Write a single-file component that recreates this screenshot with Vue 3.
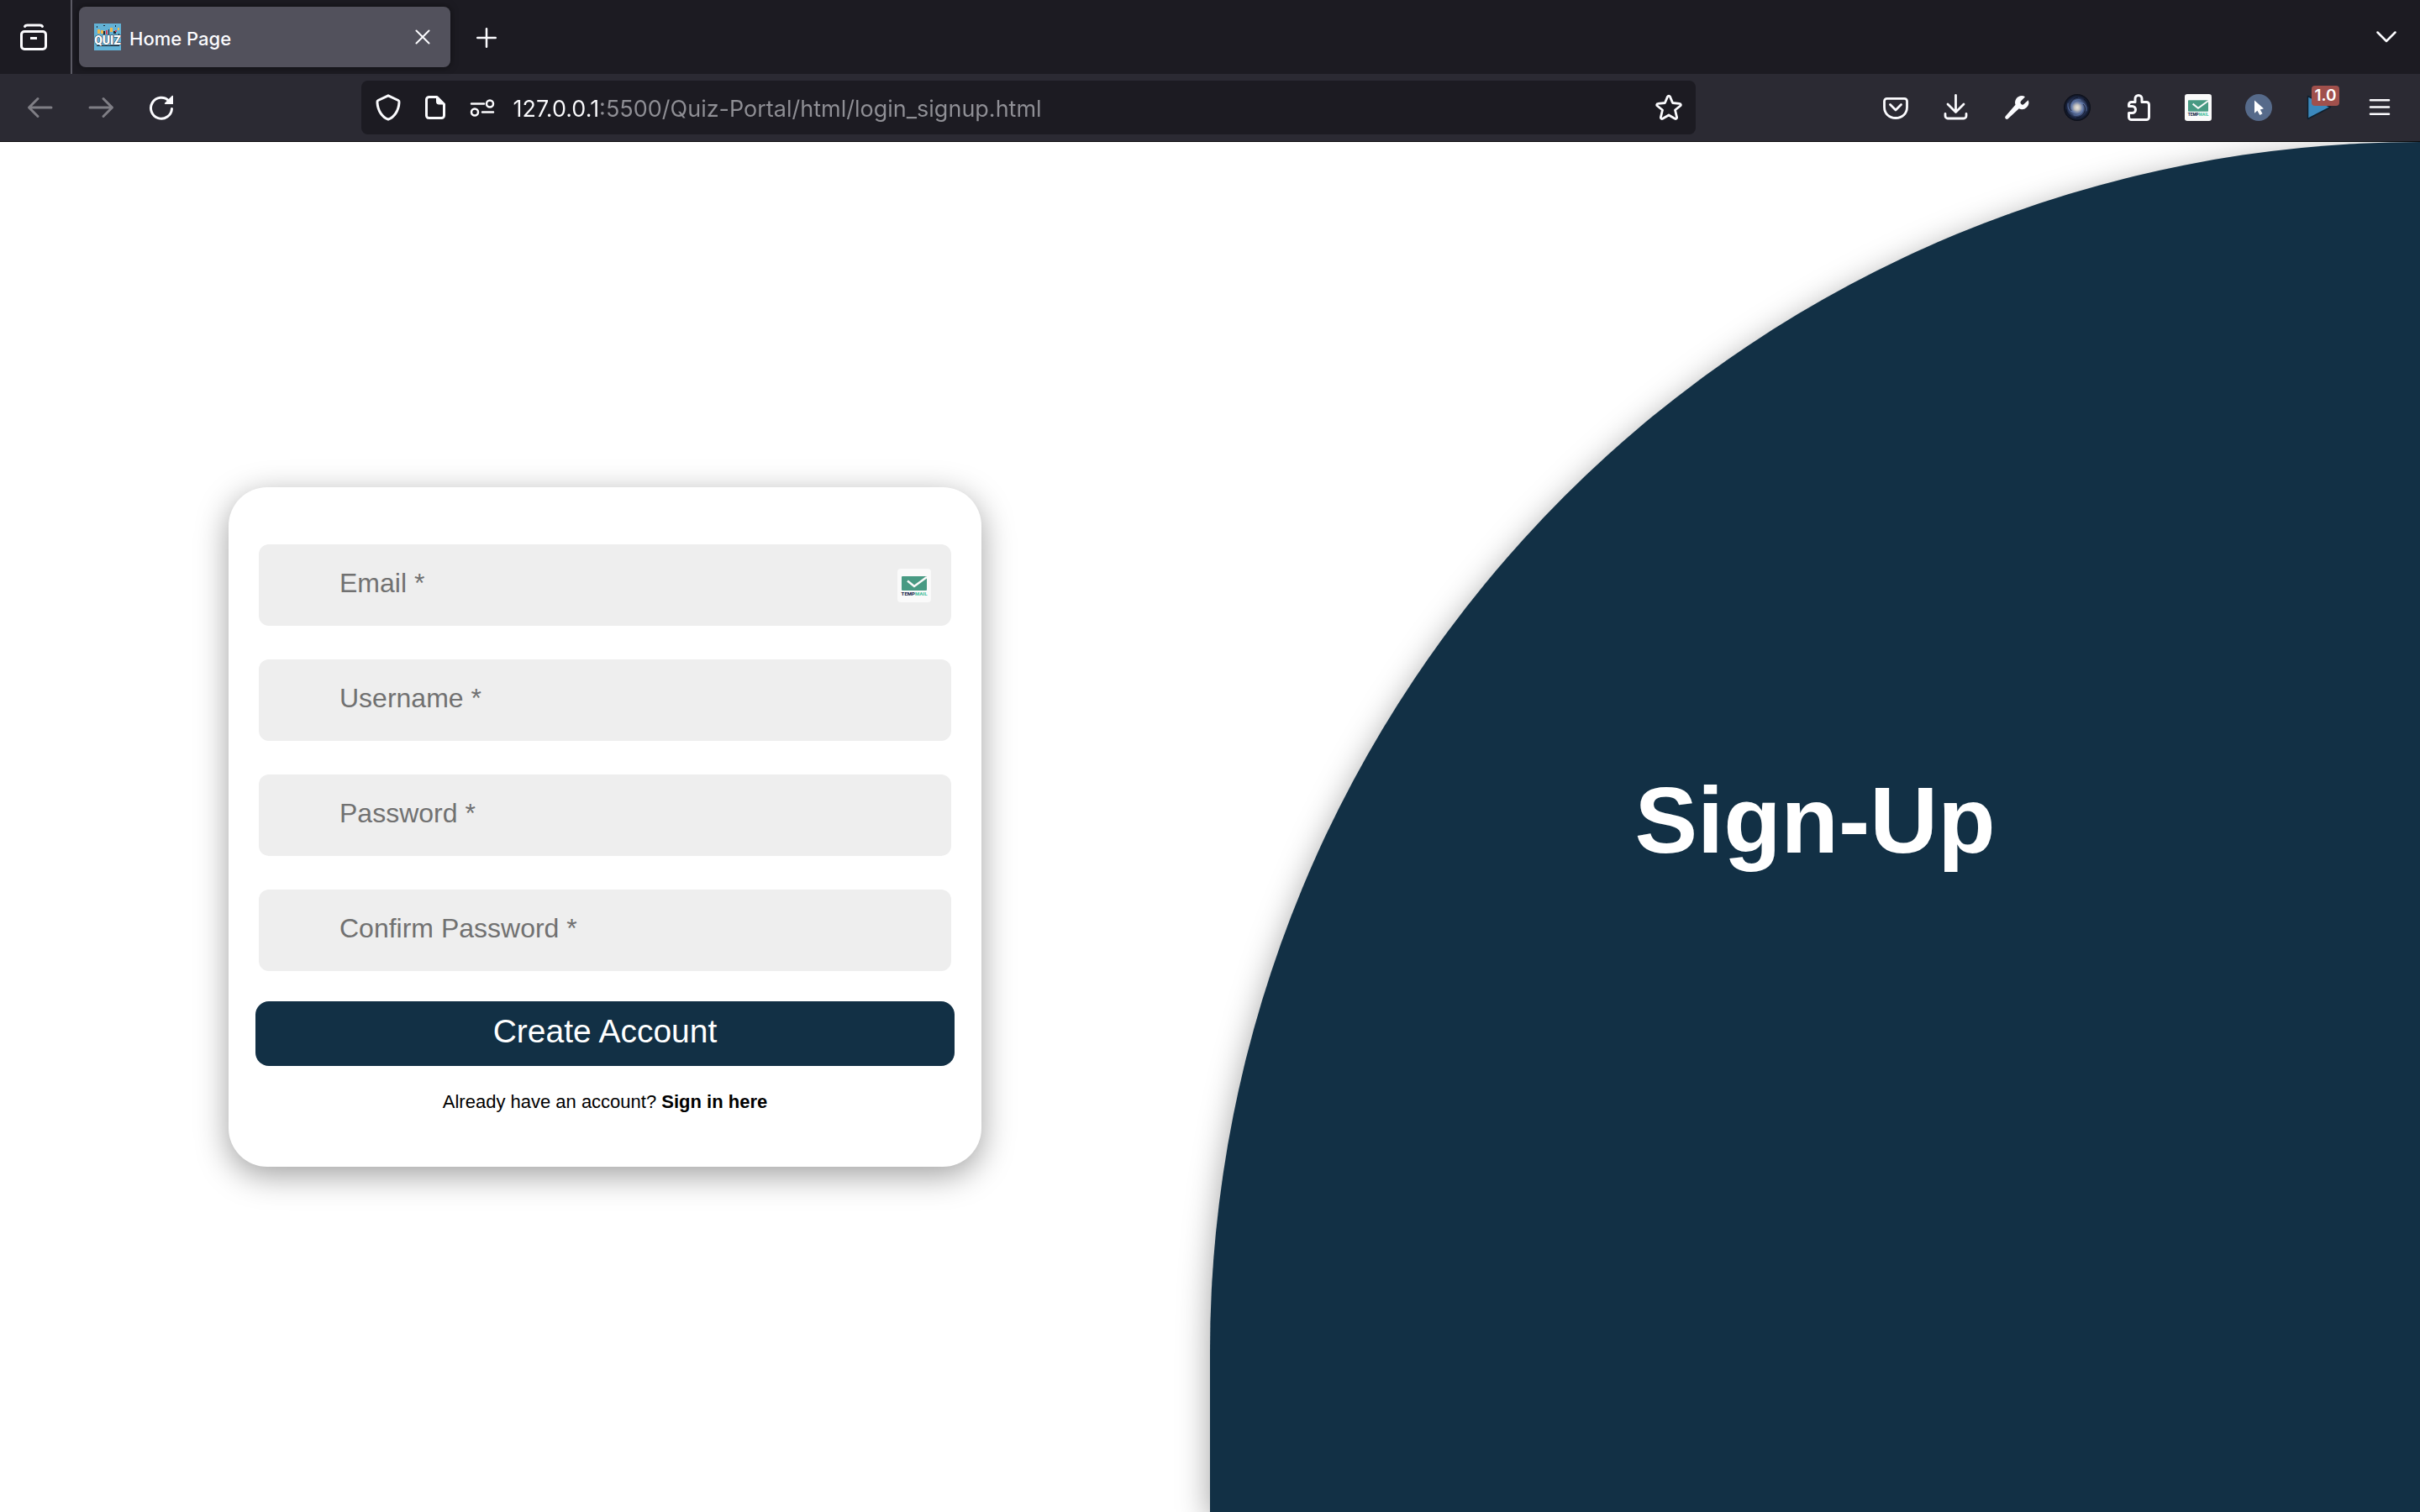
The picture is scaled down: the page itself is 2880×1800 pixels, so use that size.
<script setup>
import { ref } from 'vue'

const address = ref('127.0.0.1:5500/Quiz-Portal/html/login_signup.html')

const fields = ref([
  { id: 'email', type: 'email', label: 'Email *', value: '', tempMail: true },
  { id: 'username', type: 'text', label: 'Username *', value: '' },
  { id: 'password', type: 'password', label: 'Password *', value: '' },
  { id: 'confirm', type: 'password', label: 'Confirm Password *', value: '' },
])
</script>

<template>
  <div class="window">
    <header class="chrome">
      <div class="tabs">
        <button class="recent" type="button" aria-label="Recent browsing">
          <svg width="32" height="32" viewBox="0 0 32 32" fill="none" stroke="currentColor" stroke-width="3" stroke-linecap="round">
            <path d="M5.500 3.500C6 2.500 7 2 8.500 2H23.500C25 2 26 2.500 26.500 3.500" />
            <rect x="1.500" y="9.500" width="29" height="21" rx="3.500" />
            <path d="M12 17.500H20" stroke-linecap="butt" />
          </svg>
        </button>
        <div class="tab">
          <svg class="favicon" width="32" height="32" viewBox="0 0 32 32" aria-hidden="true">
            <rect width="32" height="32" fill="#62b2d6" />
            <g fill="#f2b84b"><rect x="4" y="7" width="3" height="5" /><rect x="8" y="8" width="3" height="4" /><rect x="19" y="5" width="3" height="5" /><rect x="28" y="5" width="2" height="3" /></g>
            <g fill="#1c2733"><rect x="3" y="3" width="1" height="2" /><rect x="11" y="2" width="2" height="1" /><rect x="25" y="2" width="1" height="2" /><rect x="11" y="9" width="2" height="4" /><rect x="17" y="7" width="1" height="6" /><rect x="23" y="9" width="3" height="3" /><rect x="2" y="15" width="1" height="3" /><rect x="29" y="12" width="1" height="2" /><rect x="3" y="26" width="27" height="1" /></g>
            <g fill="#d6455d"><rect x="14" y="8" width="2" height="5" /><rect x="28" y="15" width="3" height="3" /><rect x="25" y="8" width="2" height="2" /></g>
            <text x="16" y="25" text-anchor="middle" font-family="Roboto, sans-serif" font-weight="900" font-size="14" fill="#ffffff" stroke="#24323f" stroke-width="1" paint-order="stroke">QUIZ</text>
          </svg>
          <span class="tab-title">Home Page</span>
          <button class="close" type="button" aria-label="Close tab">
            <svg width="20" height="20" viewBox="0 0 20 20" fill="none" stroke="currentColor" stroke-width="2" stroke-linecap="round"><path d="M2.500 2.500 17.500 17.500M17.500 2.500 2.500 17.500" /></svg>
          </button>
        </div>
        <button class="new-tab" type="button" aria-label="New tab">
          <svg width="24" height="24" viewBox="0 0 24 24" fill="none" stroke="currentColor" stroke-width="2.500" stroke-linecap="round"><path d="M12 1.250V22.750M1.250 12H22.750" /></svg>
        </button>
        <button class="all-tabs" type="button" aria-label="List all tabs">
          <svg width="24" height="14" viewBox="0 0 24 14" fill="none" stroke="currentColor" stroke-width="2.500" stroke-linecap="round" stroke-linejoin="round"><path d="M1.500 1.500 12 12 22.500 1.500" /></svg>
        </button>
      </div>

      <div class="toolbar">
        <button class="tool dim" type="button" aria-label="Back">
          <svg width="32" height="32" viewBox="0 0 32 32" fill="none" stroke="currentColor" stroke-width="3" stroke-linecap="round" stroke-linejoin="round"><path d="M29 16H3M13 5.500 2.500 16 13 26.500" /></svg>
        </button>
        <button class="tool dim" type="button" aria-label="Forward">
          <svg width="32" height="32" viewBox="0 0 32 32" fill="none" stroke="currentColor" stroke-width="3" stroke-linecap="round" stroke-linejoin="round"><path d="M3 16H29M19 5.500 29.500 16 19 26.500" /></svg>
        </button>
        <button class="tool" type="button" aria-label="Reload">
          <svg width="32" height="32" viewBox="0 0 32 32" fill="none" stroke="currentColor" stroke-width="3" stroke-linecap="round"><path d="M25 8A12.500 12.500 0 1 0 28.500 17.500" /><path d="M30 2.500V12H20.500a.8.8 0 0 1-.5-1.300L28.700 2a.8.8 0 0 1 1.300.5z" fill="currentColor" stroke="none" /></svg>
        </button>

        <span class="spring"></span>
        <div class="urlbar">
          <button class="site" type="button" aria-label="Tracking protection">
            <svg width="32" height="32" viewBox="0 0 32 32" fill="none" stroke="currentColor" stroke-width="3" stroke-linejoin="round"><path d="M16 1.800 28 7.500C29 8 29.200 8.600 29 10 28.500 20 23 27.500 16 30.200 9 27.500 3.500 20 3 10 2.800 8.600 3 8 4 7.500z" /></svg>
          </button>
          <button class="site" type="button" aria-label="Site information">
            <svg width="32" height="32" viewBox="0 0 32 32" fill="none" stroke="currentColor" stroke-width="3" stroke-linejoin="round"><path d="M8.500 3.500H18L26.500 12V25.500a3 3 0 0 1-3 3H8.500a3 3 0 0 1-3-3V6.500a3 3 0 0 1 3-3z" /><path d="M17.500 3.500V9.500a2.500 2.500 0 0 0 2.500 2.500H26.500z" fill="currentColor" stroke-width="1" /></svg>
          </button>
          <button class="site" type="button" aria-label="Permissions">
            <svg width="32" height="32" viewBox="0 0 32 32" fill="none" stroke="currentColor" stroke-width="2.500" stroke-linecap="round"><path d="M3 11.500H18M16 21.500H29" /><circle cx="25" cy="11.500" r="4" /><circle cx="7" cy="21.500" r="4" /></svg>
          </button>
          <input v-model="address" class="address" type="text" aria-label="Address" spellcheck="false" />
          <button class="site" type="button" aria-label="Bookmark this page">
            <svg width="32" height="32" viewBox="0 0 32 32" fill="none" stroke="currentColor" stroke-width="2.800" stroke-linejoin="round"><path d="M14.600 2.900a1.600 1.600 0 0 1 2.800 0L20.600 10.500 28.800 11.300a1.500 1.500 0 0 1 .9 2.700L23.500 19 25.600 27.600a1.500 1.500 0 0 1-2.300 1.600L16 25 8.700 29.200a1.500 1.500 0 0 1-2.300-1.600L8.500 19 2.300 14a1.500 1.500 0 0 1 .9-2.700L11.400 10.500z" /></svg>
          </button>
        </div>
        <span class="spring"></span>

        <button class="tool" type="button" aria-label="Pocket">
          <svg width="32" height="32" viewBox="0 0 32 32" fill="none" stroke="currentColor" stroke-width="2.800" stroke-linecap="round" stroke-linejoin="round"><path d="M5.500 5.400H26.500a3 3 0 0 1 3 3V15.500C29.500 23.500 23.500 28.500 16 28.500S2.500 23.500 2.500 15.500V8.400a3 3 0 0 1 3-3z" /><path d="M9.500 12.500 16 19 22.500 12.500" /></svg>
        </button>
        <button class="tool" type="button" aria-label="Downloads">
          <svg width="32" height="32" viewBox="0 0 32 32" fill="none" stroke="currentColor" stroke-width="2.800" stroke-linecap="round" stroke-linejoin="round"><path d="M15.500 1.500V21M6 12 15.500 21.500 25 12M3 23.500V26a3 3 0 0 0 3 3H25a3 3 0 0 0 3-3V23.500" /></svg>
        </button>
        <button class="tool" type="button" aria-label="Developer tools">
          <svg width="32" height="32" viewBox="0 0 32 32" fill="currentColor"><path d="M22 2.100a8 8 0 0 0-7.500 10.700L2.800 26.300a2.100 2.100 0 0 0 3 3L18.800 17.200A8 8 0 0 0 29.800 7.200L24.800 11.800a2.500 2.500 0 0 1-3.600-3.500L26 3.200A8 8 0 0 0 22 2.100z" /></svg>
        </button>
        <button class="tool" type="button" aria-label="Galaxy theme">
          <svg width="32" height="32" viewBox="0 0 32 32" fill="none">
            <defs>
              <radialGradient id="galaxy">
                <stop offset="0" stop-color="#e9e4da" />
                <stop offset="0.200" stop-color="#c4c2c0" />
                <stop offset="0.450" stop-color="#5b6f9c" />
                <stop offset="0.750" stop-color="#1d2846" />
                <stop offset="1" stop-color="#0a0c14" />
              </radialGradient>
            </defs>
            <circle cx="16" cy="16" r="16" fill="url(#galaxy)" />
            <g stroke="#6f8fc9" stroke-linecap="round" opacity="0.500"><path d="M11 17C7 12 12 5 20 7M21 15C25 20 20 27 12 25M14 21C8 22 4 18 5 11M18 11C24 9 28 14 27 20" /></g>
            <g stroke="#070a14" opacity="0.600"><path d="M9 20C4 14 9 5 17 4M23 12C29 18 23 28 15 28M24 6C27 8 29 11 29 15M8 26C5 24 3 21 3 18" /></g>
          </svg>
        </button>
        <button class="tool" type="button" aria-label="Extensions">
          <svg width="32" height="32" viewBox="0 0 32 32" fill="none" stroke="currentColor" stroke-width="3" stroke-linejoin="round"><path d="M13 9.500V5.500a4 4 0 0 1 8 0V9.500H26.500a3 3 0 0 1 3 3V27.500a3 3 0 0 1-3 3H8.500a3 3 0 0 1-3-3V22.500H9.500a4 4 0 0 0 0-8H5.500V12.500a3 3 0 0 1 3-3z" /></svg>
        </button>
        <button class="tool" type="button" aria-label="Temp Mail">
          <svg width="32" height="32" viewBox="0 0 40 40" aria-hidden="true">
            <rect width="40" height="40" rx="4" fill="#fafafa" />
            <rect x="5" y="9" width="30" height="17" rx="1" fill="#489a83" />
            <path d="M12 14.500 20 21 35 10" fill="none" stroke="#fafafa" stroke-width="2.500" />
            <text x="20" y="32" text-anchor="middle" font-family="Roboto, sans-serif" font-weight="900" font-size="6" fill="#1d2c4d">TEMP<tspan fill="#52c2a2">MAIL</tspan></text>
          </svg>
        </button>
        <button class="tool" type="button" aria-label="Cursor">
          <svg width="32" height="32" viewBox="0 0 32 32"><circle cx="16" cy="16" r="16" fill="#566a8a" /><path d="M11 7.500V22.800L14.400 19.800 17.400 25 20.500 23.200 17.800 18.400 22 17.200z" fill="#ffffff" /></svg>
        </button>
        <button class="tool" type="button" aria-label="Video speed 1.0">
          <svg width="32" height="32" viewBox="0 0 32 32"><path d="M2.500 2.500V29.500L29.500 15.500z" fill="#3b88bd" stroke="#10202e" stroke-width="1.500" stroke-linejoin="round" /></svg>
          <span class="badge">1.0</span>
        </button>
        <button class="tool" type="button" aria-label="Menu">
          <svg width="32" height="32" viewBox="0 0 32 32" fill="none" stroke="currentColor" stroke-width="2.600" stroke-linecap="round"><path d="M5 7.200H27M5 15.500H27M5 23.800H27" /></svg>
        </button>
      </div>
    </header>

    <main class="page">
      <section class="side">
        <form class="card" @submit.prevent>
          <div v-for="field in fields" :key="field.id" class="field">
            <input :id="field.id" v-model="field.value" :type="field.type" :placeholder="field.label" :aria-label="field.label" />
            <svg v-if="field.tempMail" class="temp-mail" width="40" height="40" viewBox="0 0 40 40" aria-hidden="true">
              <rect width="40" height="40" rx="4" fill="#fafafa" />
              <rect x="5" y="9" width="30" height="17" rx="1" fill="#489a83" />
              <path d="M12 14.500 20 21 35 10" fill="none" stroke="#fafafa" stroke-width="2.500" />
              <text x="20" y="32" text-anchor="middle" font-family="Roboto, sans-serif" font-weight="900" font-size="6" fill="#1d2c4d">TEMP<tspan fill="#52c2a2">MAIL</tspan></text>
            </svg>
          </div>
          <button class="submit" type="submit">Create Account</button>
          <p class="switch">Already have an account? <a href="#signin">Sign in here</a></p>
        </form>
      </section>
      <section class="panel">
        <h1>Sign-Up</h1>
      </section>
    </main>
  </div>
</template>

<style>
body {
  margin: 0;
  background: #ffffff;
}
</style>

<style scoped>
.window {
  display: flex;
  flex-direction: column;
  min-height: 100vh;
  font-family: "Liberation Sans", Arial, sans-serif;
}

button {
  margin: 0;
  padding: 0;
  border: 0;
  background: none;
  color: inherit;
  font: inherit;
}

svg {
  display: block;
  flex: none;
}

.chrome {
  border-bottom: 1px solid #0c0c0d;
  background: #2b2a33;
  color: #fbfbfe;
  font-family: Inter, sans-serif;
}

.tabs {
  display: flex;
  align-items: center;
  height: 88px;
  background: #1c1b22;
}

.recent {
  display: flex;
  align-items: center;
  justify-content: center;
  align-self: stretch;
  width: 86px;
  padding-right: 4px;
  border-right: 2px solid #5b5a64;
}

.tab {
  display: flex;
  align-items: center;
  box-sizing: border-box;
  width: 442px;
  height: 72px;
  margin-left: 8px;
  padding: 0 23px 0 18px;
  border-radius: 8px;
  background: #52515c;
  box-shadow: 0 0 8px rgba(0, 0, 0, 0.5);
}

.tab-title {
  flex: 1;
  margin-left: 10px;
  padding-top: 3px;
  font-size: 22px;
  font-weight: 500;
  line-height: 28px;
}

.new-tab {
  margin-left: 31px;
  padding-top: 2px;
}

.all-tabs {
  margin: 0 28px 0 auto;
}

.toolbar {
  display: flex;
  align-items: center;
  height: 80px;
  padding: 0 12px;
}

.tool {
  position: relative;
  display: flex;
  flex: none;
  align-items: center;
  justify-content: center;
  width: 72px;
  height: 64px;
}

.dim {
  color: #7f7e85;
}

.spring {
  flex: 10;
}

.urlbar {
  display: flex;
  flex: 78;
  align-items: center;
  box-sizing: border-box;
  height: 64px;
  padding: 0 4px;
  border-radius: 8px;
  background: #1c1b22;
}

.site {
  display: flex;
  flex: none;
  align-items: center;
  justify-content: center;
  width: 56px;
  height: 56px;
}

.address {
  flex: 1;
  min-width: 0;
  height: 56px;
  margin: 0 0 0 8px;
  padding: 2px 0 0;
  border: 0;
  outline: 0;
  color: #8f8f95;
  background: linear-gradient(to right, #fbfbfe 104px, #8f8f95 104px);
  background-clip: text;
  -webkit-text-fill-color: transparent;
  font-family: Inter, sans-serif;
  font-size: 27px;
}

.badge {
  position: absolute;
  top: 6px;
  right: 12px;
  width: 33px;
  border-radius: 4px;
  background: #a0504c;
  color: #ffffff;
  font-size: 19px;
  font-weight: 600;
  line-height: 24px;
  text-align: center;
}

.page {
  display: flex;
  flex: 1;
  overflow: hidden;
}

.side,
.panel {
  display: flex;
  flex: 1;
  align-items: center;
  justify-content: center;
}

.card {
  box-sizing: border-box;
  width: 90%;
  max-width: 896px;
  padding: 68px 32px 64px;
  border-radius: 46px;
  background: #ffffff;
  box-shadow: 0 10px 38px rgba(0, 0, 0, 0.38);
}

.field {
  position: relative;
  margin: 0 4px 40px;
}

.field input {
  display: block;
  box-sizing: border-box;
  width: 100%;
  height: 97px;
  padding: 0 96px 4px;
  border: 0;
  border-radius: 12px;
  background: #eeeeee;
  color: #222222;
  font-family: inherit;
  font-size: 32px;
}

.field input::placeholder {
  color: #717171;
  opacity: 1;
}

.temp-mail {
  position: absolute;
  top: 29px;
  right: 24px;
}

.submit {
  display: block;
  width: 100%;
  height: 77px;
  margin-top: -4px;
  padding-bottom: 6px;
  border-radius: 16px;
  background: #123045;
  color: #ffffff;
  font-size: 39px;
}

.switch {
  margin: 30px 0 0;
  color: #000000;
  font-size: 22px;
  line-height: 26px;
  text-align: center;
}

.switch a {
  color: inherit;
  font-weight: 700;
  text-decoration: none;
}

.panel {
  border-top-left-radius: 50vw;
  background: #123045;
  box-shadow: 0 10px 38px rgba(0, 0, 0, 0.38);
}

.panel h1 {
  margin: 0;
  padding-bottom: 16px;
  color: #ffffff;
  font-size: 112px;
  line-height: 128px;
}
</style>
